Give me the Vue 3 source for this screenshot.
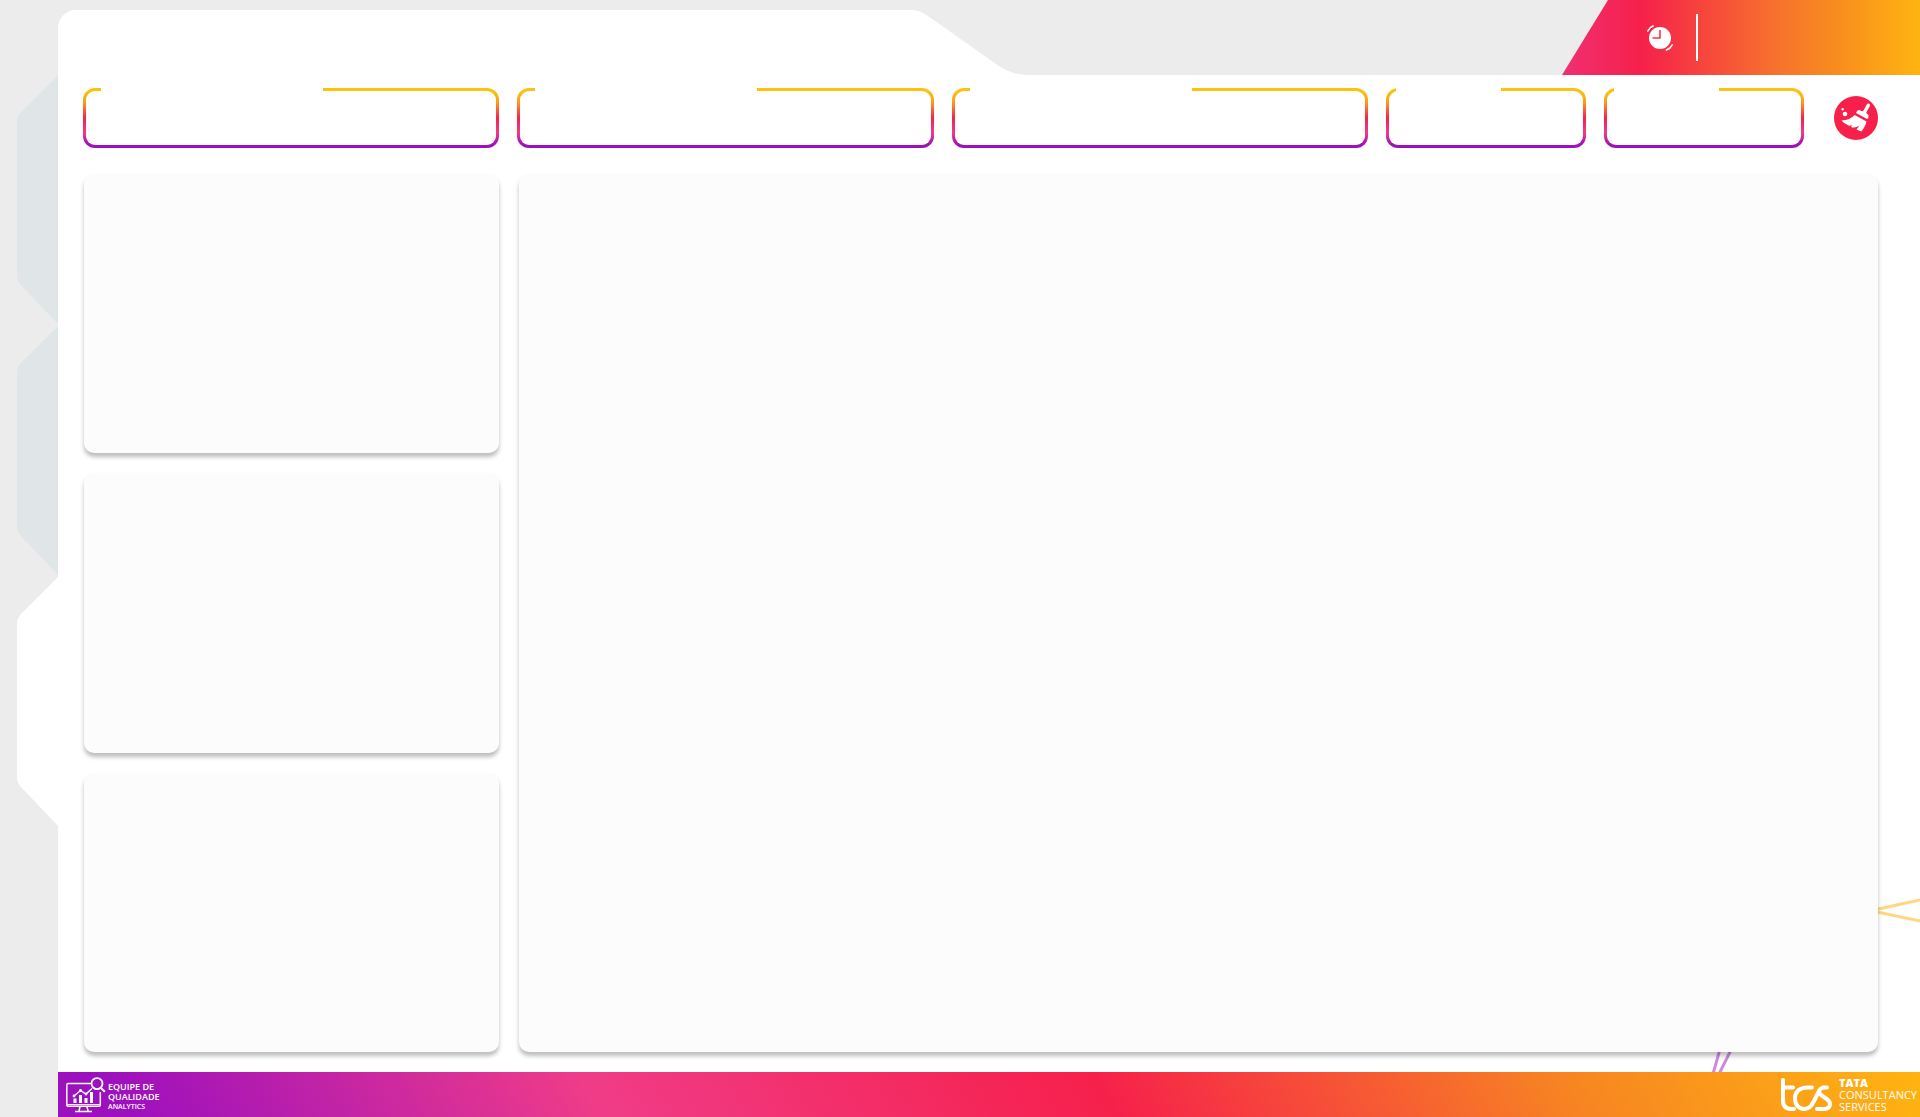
<script setup>
const tabs = [
  { id: 'first', label: 'Primeira página', active: false },
  { id: 'second', label: 'Segunda página', active: false },
  { id: 'third', label: 'Terceira página', active: true },
]
const filters = ['wide', 'wide', 'wide', 'narrow', 'narrow']
</script>

<template>
  <div class="app">
    <header class="top">
      <div class="title-bar"></div>
      <svg class="slope" width="120" height="65" viewBox="0 0 120 65" aria-hidden="true">
        <path d="M0 0H2Q10 0 18 6L86 54Q101 65 118 65H0Z" fill="#fff" />
      </svg>
      <div class="status">
        <svg class="clock" width="28" height="28" viewBox="-14 -14 28 28" aria-hidden="true">
          <circle r="11" fill="#fff" />
          <path d="M0-8V0H-7.5" fill="none" stroke="#f4354a" stroke-width="1.6" />
          <path d="M-12.2-7Q-10.5-10.5-7-12M6.5 12Q10.5 10.5 12.2 7" fill="none" stroke="#fff" stroke-width="1.7" stroke-linecap="round" />
        </svg>
        <span class="divider"></span>
      </div>
    </header>

    <div class="body">
      <nav class="tabs">
        <a v-for="t in tabs" :key="t.id" href="#" class="tab" :class="{ active: t.active }" :aria-label="t.label">
          <svg width="41" height="250" viewBox="0 0 41 250" aria-hidden="true">
            <path d="M41 0L4 37Q0 41 0 47V201Q0 206 4 210L41 249Z" />
          </svg>
        </a>
      </nav>

      <main class="page">
        <svg class="rays" width="220" height="180" viewBox="0 0 220 180" fill="none" stroke-width="3" aria-hidden="true">
          <path d="M170 18.7L222 7.5M170 18.5L222 29.4" stroke="#ffd682" />
          <path d="M22 150L13 182M35 150L19 182" stroke="#cf8ade" />
        </svg>
        <div class="filters">
          <div v-for="(f, i) in filters" :key="i" class="filter" :class="f"></div>
          <button class="clear" type="button" aria-label="Limpar filtros">
            <svg width="44" height="44" viewBox="0 0 44 44" fill="#fff" aria-hidden="true">
              <path d="M34.3 9.3L30 17" stroke="#fff" stroke-width="3.4" stroke-linecap="round" />
              <path d="M25 14L28 15.3Q31 13.5 33 17.8L34.5 19Q35 22 33 23L22 17Q23 14 25 14Z" />
              <path d="M20.7 19L32.5 25.5C32 29 29 33 27.5 35.5L22.5 33.5L25.5 29.5Q21 32.5 17 31L18 29Q14 30.5 13 28.5Q9 26.5 7.5 24.5Q16 24 20.7 19Z" />
              <circle cx="11" cy="18" r="2.3" />
              <circle cx="8.7" cy="13.3" r="1.2" />
            </svg>
          </button>
        </div>
        <div class="content">
          <div class="stack">
            <section class="card"></section>
            <section class="card"></section>
            <section class="card"></section>
          </div>
          <section class="card main-card"></section>
        </div>
      </main>
    </div>

    <footer class="bottom">
      <div class="brand">
        <svg width="40" height="36" viewBox="0 0 40 36" fill="none" stroke="#fff" aria-hidden="true">
          <path d="M25 6.5H2Q.8 6.5.8 8V28Q.8 29.3 2 29.3H33Q34.3 29.3 34.3 28V15" stroke-width="1.5" />
          <path d="M14 29.5L13 34M21 29.5L22 34M9 34.4H26" stroke-width="1.5" />
          <path d="M1 27.6H34" stroke-width="1" />
          <circle cx="31" cy="6.6" r="5.5" stroke-width="1.8" />
          <path d="M35 11L38.8 14.7" stroke-width="2" />
          <path d="M8 19L14.5 13.5L20 17L26 11.5" stroke-width="1.4" />
          <path d="M9 21.5V26M14.5 18V26M20 21V26M25.5 15V26" stroke-width="3" />
          <g fill="#fff" stroke="none"><circle cx="8" cy="19" r="1.4" /><circle cx="14.5" cy="13.5" r="1.4" /><circle cx="20" cy="17" r="1.4" /></g>
        </svg>
        <p class="team"><span>EQUIPE DE</span><span>QUALIDADE</span><small>ANALYTICS</small></p>
      </div>
      <div class="brand">
        <svg width="52" height="34" viewBox="0 0 52 34" fill="none" stroke="#fff" stroke-width="4" stroke-linecap="round" stroke-linejoin="round" aria-hidden="true">
          <path d="M2 2V22Q2 31 10 31H13" />
          <path d="M2 9.5H12" />
          <path d="M31 9.5H27C18 9.5 14 14 14 20.5C14 27 18 31 23 31C29 31 31 27 34 21L38 13Q40 9.5 43 9.5H46" />
          <path d="M38 14C39 19 49 20 49 26Q49 31 43 31H36" />
        </svg>
        <p class="company"><b>TATA</b><span>CONSULTANCY</span><span>SERVICES</span></p>
      </div>
    </footer>
  </div>
</template>

<style>
body {
  margin: 0;
  background: #ececec;
}
</style>

<style scoped>
.app {
  display: flex;
  flex-direction: column;
  min-height: 100vh;
  background: #ececec;
  color: #fff;
  font-family: "Open Sans", "Noto Sans", sans-serif;
}
.top {
  display: flex;
  align-items: flex-end;
  height: 75px;
  padding-left: 58px;
}
.title-bar {
  width: 852px;
  height: 65px;
  border-top-left-radius: 18px;
  background: #fff;
}
.slope {
  display: block;
}
.status {
  display: flex;
  align-items: center;
  box-sizing: border-box;
  width: 358px;
  height: 75px;
  margin-left: auto;
  padding-left: 84px;
  gap: 22px;
  background: linear-gradient(90deg, #f02f72 0%, #f6204b 22%, #f7722d 60%, #f78820 74%, #ffb411 100%);
  clip-path: polygon(46px 0, 100% 0, 100% 100%, 0 100%);
}
.divider {
  width: 2px;
  height: 47px;
  background: #fff;
}
.body {
  display: flex;
  flex: 1;
}
.tabs {
  display: flex;
  flex-direction: column;
  gap: 1px;
  width: 58px;
}
.tab {
  display: flex;
  justify-content: flex-end;
  fill: #e0e6e8;
}
.tab.active {
  fill: #fff;
}
.page {
  position: relative;
  display: flex;
  flex: 1;
  flex-direction: column;
  gap: 26px;
  padding: 13px 42px 20px 25px;
  background: #fff;
}
.rays {
  position: absolute;
  right: 0;
  bottom: 0;
}
.filters {
  display: grid;
  grid-template-columns: repeat(3, 417fr) repeat(2, 200fr) 56px;
  align-items: center;
  column-gap: 18px;
}
.filter {
  position: relative;
  box-sizing: border-box;
  height: 60px;
  border: 3px solid transparent;
  border-radius: 12px;
  background:
    linear-gradient(#fff, #fff) padding-box,
    linear-gradient(#ffc20c 0%, #ffc20c 6%, #fb9a1e 24%, #f7204c 50%, #f03c88 75%, #b41cae 88%, #9d10be 96%) border-box;
}
.filter::before {
  content: "";
  position: absolute;
  top: -3px;
  left: 15px;
  width: 222px;
  height: 4px;
  background: #fff;
}
.filter.narrow::before {
  left: 7px;
  width: 105px;
}
.clear {
  justify-self: end;
  width: 44px;
  height: 44px;
  padding: 0;
  border: 0;
  border-radius: 50%;
  background: #f6204b;
  cursor: pointer;
}
.clear svg {
  display: block;
}
.content {
  position: relative;
  display: flex;
  flex: 1;
  gap: 20px;
  padding-left: 1px;
}
.stack {
  display: flex;
  flex: 415;
  flex-direction: column;
  gap: 20px;
}
.card {
  flex: 1;
  border-radius: 10px;
  background: #fcfcfc;
  box-shadow: 0 4px 4px rgba(0, 0, 0, 0.26);
}
.main-card {
  flex: 1359;
}
.bottom {
  display: flex;
  align-items: center;
  justify-content: space-between;
  height: 45px;
  margin-left: 58px;
  padding: 0 3px 0 8px;
  background: linear-gradient(60deg, #9d10be 0%, #9d10be 4%, #f03c88 29%, #f6204b 56%, #f78522 81%, #ffb411 100%);
}
.brand {
  display: flex;
  align-items: center;
  gap: 2px;
}
.brand p {
  display: flex;
  flex-direction: column;
  margin: 0;
}
.team {
  font-size: 9px;
  font-weight: 600;
  line-height: 10px;
}
.brand .team {
  padding-top: 4px;
}
.team small {
  font-size: 7px;
  line-height: 10px;
}
.company {
  padding-left: 4px;
  font-size: 11px;
  font-weight: 500;
  line-height: 12px;
}
.company b {
  font-weight: 800;
}
</style>
